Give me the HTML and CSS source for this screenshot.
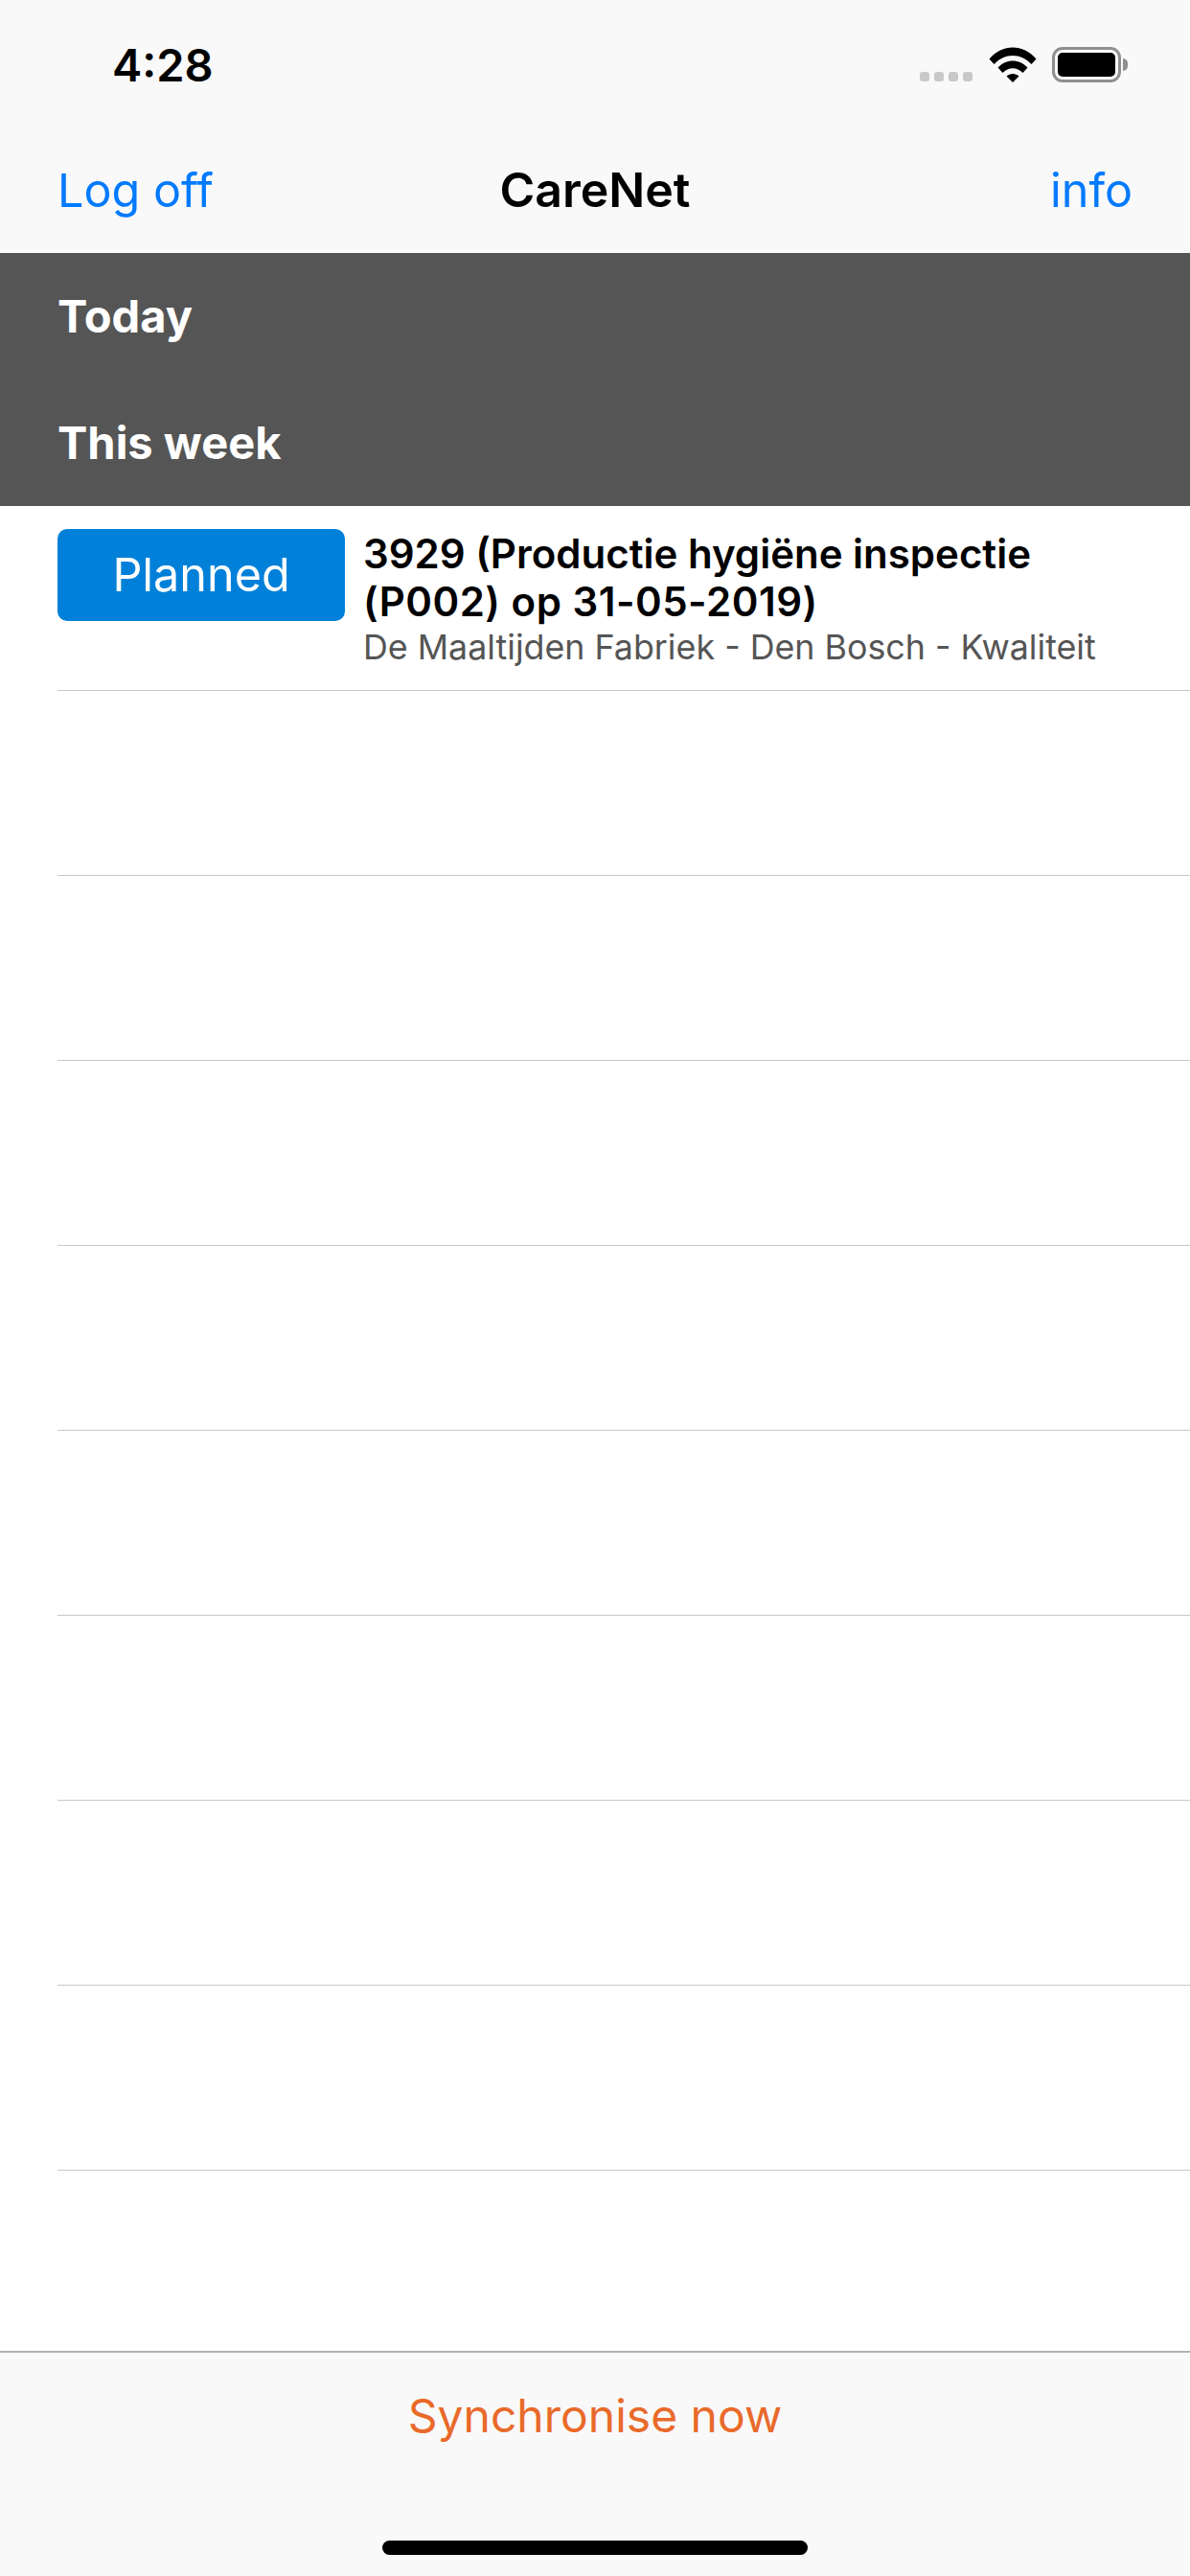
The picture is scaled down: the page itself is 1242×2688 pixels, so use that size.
FILE: index.html
```html
<html>
    <head>
        <title>CareNet</title>
        <link rel="stylesheet" href="styles.css">
    </head>
    <body>
        <div class="status_bar">
            <div class="time">4:28</div>
            <div class="status_icons">
                <div class="signal">
                    <span class="dot"></span>
                    <span class="dot"></span>
                    <span class="dot"></span>
                    <span class="dot"></span>
                </div>
                <svg class="wifi" width="50" height="37" viewBox="0 0 50 37">
                    <path d="M0.5 12.5 C14 -3.5 36 -3.5 49.5 12.5 L44.5 18 C33 6 17 6 5.5 18 Z" fill="#000"/>
                    <path d="M9.5 21.5 C18 12 32 12 40.5 21.5 L35.5 27 C29.500 20.500 20.500 20.500 14.500 27 Z" fill="#000"/>
                    <path d="M18.500 30.500 C22 27 28 27 31.500 30.500 L25 37 Z" fill="#000"/>
                </svg>
                <div class="battery">
                    <div class="battery_body"><div class="battery_fill"></div></div>
                    <div class="battery_nub"></div>
                </div>
            </div>
        </div>

        <div class="nav_bar">
            <a class="nav_link">Log off</a>
            <div class="nav_title">CareNet</div>
            <a class="nav_link nav_link_right">info</a>
        </div>

        <div class="sections">
            <div class="section_title">Today</div>
            <div class="section_title">This week</div>
        </div>

        <div class="list">
            <div class="row first_row">
                <div class="badge">Planned</div>
                <div class="row_text">
                    <div class="row_title">3929 (Productie hygiëne inspectie</div>
                    <div class="row_title row_title_date">(P002) op 31-05-2019)</div>
                    <div class="row_sub">De Maaltijden Fabriek - Den Bosch - Kwaliteit</div>
                </div>
            </div>
            <div class="row"></div>
            <div class="row"></div>
            <div class="row"></div>
            <div class="row"></div>
            <div class="row"></div>
            <div class="row"></div>
            <div class="row"></div>
            <div class="row"></div>
        </div>

        <div class="footer">
            <a class="sync_link">Synchronise now</a>
            <div class="home_bar"></div>
        </div>
    </body>
</html>
```

FILE: styles.css
```css
html, body {
    margin: 0;
    padding: 0;
}

body {
    width: 1242px;
    height: 2688px;
    display: flex;
    flex-direction: column;
    background: #fff;
    font-family: "Inter", "Liberation Sans", sans-serif;
    overflow: hidden;
}

.status_bar {
    height: 132px;
    flex: none;
    display: flex;
    justify-content: space-between;
    background: #f9f9f9;
    padding: 45px 65px 0 117px;
    box-sizing: border-box;
}

.time {
    font-size: 47px;
    line-height: 46px;
    font-weight: 600;
    color: #000;
}

.status_icons {
    display: flex;
    align-items: flex-start;
    padding-top: 4px;
}

.signal {
    display: flex;
    gap: 5px;
    margin-top: 26px;
    margin-right: 17px;
}

.dot {
    width: 10px;
    height: 10px;
    border-radius: 3px;
    background: #c8c8c8;
}

.wifi {
    margin-right: 16px;
}

.battery {
    display: flex;
    align-items: center;
}

.battery_body {
    width: 72px;
    height: 37px;
    box-sizing: border-box;
    border: 3px solid #8f8f8f;
    border-radius: 11px;
    padding: 3px;
}

.battery_fill {
    height: 100%;
    background: #000;
    border-radius: 5px;
}

.battery_nub {
    width: 5px;
    height: 13px;
    margin-left: 2px;
    background: #8f8f8f;
    border-radius: 0 6px 6px 0;
}

.nav_bar {
    height: 132px;
    flex: none;
    display: grid;
    grid-template-columns: 1fr auto 1fr;
    align-items: center;
    background: #f9f9f9;
    padding: 0 60px;
    box-sizing: border-box;
}

.nav_link {
    font-size: 48.5px;
    color: #007aff;
}

.nav_link_right {
    text-align: right;
}

.nav_title {
    font-size: 50px;
    font-weight: 600;
    color: #000;
}

.sections {
    height: 264px;
    flex: none;
    background: #555;
}

.section_title {
    height: 132px;
    line-height: 132px;
    padding-left: 60px;
    font-size: 47px;
    font-weight: 700;
    color: #fff;
}

.list {
    flex: 1;
    padding-left: 60px;
}

.row {
    height: 193px;
    box-sizing: border-box;
    border-bottom: 1px solid #c8c8cc;
}

.first_row {
    display: flex;
    align-items: flex-start;
    padding-top: 24px;
}

.badge {
    width: 300px;
    height: 96px;
    flex: none;
    background: #0080d9;
    border-radius: 10px;
    color: #fff;
    font-size: 48.5px;
    line-height: 96px;
    text-align: center;
}

.row_text {
    margin-left: 19px;
    padding-top: 1px;
}

.row_title {
    font-size: 42px;
    line-height: 50px;
    font-weight: 600;
    color: #000;
}

.row_title_date {
    letter-spacing: 0.5px;
}

.row_sub {
    font-size: 35.8px;
    line-height: 44px;
    color: #555;
}

.footer {
    height: 235px;
    flex: none;
    box-sizing: border-box;
    border-top: 2px solid #b2b2b2;
    background: #f9f9f9;
    display: flex;
    flex-direction: column;
    align-items: center;
}

.sync_link {
    margin-top: 35px;
    font-size: 48px;
    line-height: 62px;
    color: #e96a2a;
}

.home_bar {
    width: 444px;
    height: 15px;
    margin-top: 99px;
    border-radius: 8px;
    background: #000;
}
```
